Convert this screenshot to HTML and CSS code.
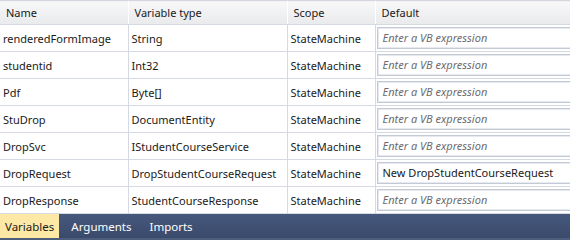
FILE: index.html
```html
<!DOCTYPE html>
<html lang="en">
<head>
    <meta charset="UTF-8">
    <title>Variables</title>
    <link rel="stylesheet" href="styles.css">
</head>
<body>
    <div class="designer">
        <table class="var-grid">
            <colgroup>
                <col class="c-name">
                <col class="c-type">
                <col class="c-scope">
                <col class="c-default">
            </colgroup>
            <tr class="head">
                <th>Name</th>
                <th>Variable type</th>
                <th>Scope</th>
                <th>Default</th>
            </tr>
            <tr>
                <td>renderedFormImage</td>
                <td>String</td>
                <td>StateMachine</td>
                <td><div class="expr empty">Enter a VB expression</div></td>
            </tr>
            <tr>
                <td>studentid</td>
                <td>Int32</td>
                <td>StateMachine</td>
                <td><div class="expr empty">Enter a VB expression</div></td>
            </tr>
            <tr>
                <td>Pdf</td>
                <td>Byte[]</td>
                <td>StateMachine</td>
                <td><div class="expr empty">Enter a VB expression</div></td>
            </tr>
            <tr>
                <td>StuDrop</td>
                <td>DocumentEntity</td>
                <td>StateMachine</td>
                <td><div class="expr empty">Enter a VB expression</div></td>
            </tr>
            <tr>
                <td>DropSvc</td>
                <td>IStudentCourseService</td>
                <td>StateMachine</td>
                <td><div class="expr empty">Enter a VB expression</div></td>
            </tr>
            <tr>
                <td>DropRequest</td>
                <td>DropStudentCourseRequest</td>
                <td>StateMachine</td>
                <td><div class="expr">New DropStudentCourseRequest</div></td>
            </tr>
            <tr>
                <td>DropResponse</td>
                <td>StudentCourseResponse</td>
                <td>StateMachine</td>
                <td><div class="expr empty">Enter a VB expression</div></td>
            </tr>
        </table>

        <!-- tabs at the bottom of the designer -->
        <div class="tabbar">
            <span class="tab active">Variables</span>
            <span class="tab">Arguments</span>
            <span class="tab">Imports</span>
        </div>
    </div>
</body>
</html>
```

FILE: styles.css
```css
body {
    margin: 0;
    font-family: 'Segoe UI', 'Noto Sans', sans-serif;
    font-size: 11px;
    color: #1a1a1a;
    background-color: #ffffff;
    overflow: hidden;
}

.designer {
    width: 570px;
    height: 240px;
    background-color: #4d5d7c;
}

.var-grid {
    width: 570px;
    border-collapse: collapse;
    table-layout: fixed;
    background-color: #ffffff;
}

.c-name { width: 128px; }
.c-type { width: 159px; }
.c-scope { width: 88px; }
.c-default { width: 195px; }

.var-grid th {
    height: 23px;
    padding: 0 0 0 6px;
    text-align: left;
    font-weight: normal;
    white-space: nowrap;
    background: linear-gradient(#f8f8f9, #e9eaec);
    border-top: 1px solid #d3d6dd;
    border-bottom: 1px solid #d5d9e2;
    border-left: 1px solid #ffffff;
}

.var-grid th:first-child {
    border-left: none;
}

.var-grid td {
    height: 26px;
    padding: 0 0 0 3px;
    white-space: nowrap;
    overflow: hidden;
    border-bottom: 1px solid #d5d9e4;
    border-left: 1px solid #d5d9e4;
}

.var-grid td:first-child {
    border-left: none;
}

.var-grid td:last-child {
    padding: 0 0 0 1px;
}

/* box for the default value */
.expr {
    height: 20px;
    line-height: 20px;
    padding: 0 0 0 5px;
    margin-right: -10px;
    border: 1px solid #c4c9d6;
    box-shadow: inset 0 0 0 1px #e6e9f0;
    background-color: #ffffff;
}

.expr.empty {
    color: #6b6b70;
    font-style: italic;
}

.tabbar {
    display: flex;
    height: 24px;
    background: linear-gradient(#46587c, #3a4a6c);
    font-size: 11.5px;
}

.tab {
    display: flex;
    align-items: center;
    padding: 0 6px 0 12px;
    color: #ffffff;
}

.tab.active {
    color: #1a1a1a;
    padding: 0 5px 0 5px;
    background-color: #fde8a6;
}
```
